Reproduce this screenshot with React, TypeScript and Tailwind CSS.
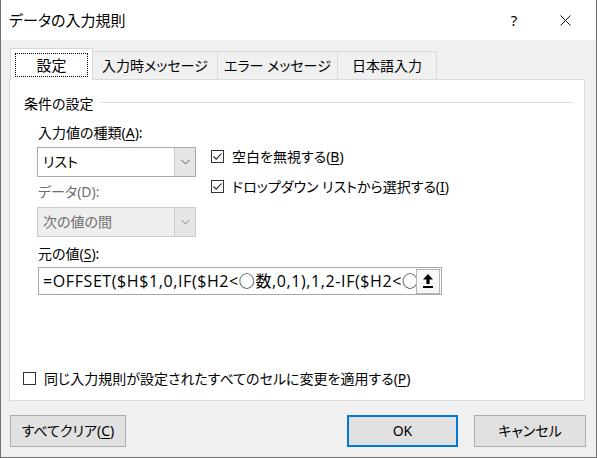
import React from "react";

const FONT = {
  fontFamily: '"Noto Sans", "Noto Sans CJK JP", sans-serif',
  fontFeatureSettings: '"palt"',
};

function Check({ checked }: { checked: boolean }) {
  return (
    <span className="w-[13px] h-[13px] border border-[#333333] bg-white flex items-center justify-center shrink-0">
      {checked && (
        <svg width="11" height="11" viewBox="0 0 11 11">
          <path d="M1.5 5.5 L4.2 8.2 L9.5 2.5" fill="none" stroke="#222" strokeWidth="1.1" />
        </svg>
      )}
    </span>
  );
}

function Chevron({ color = "#555" }: { color?: string }) {
  return (
    <svg width="9" height="6" viewBox="0 0 9 6">
      <path d="M0.5 1 L4.5 5 L8.5 1" fill="none" stroke={color} strokeWidth="1" />
    </svg>
  );
}

function Select({ value, disabled }: { value: string; disabled?: boolean }) {
  return (
    <div
      className={`w-[159px] h-[30px] flex border ${
        disabled ? "bg-[#eeeeee] border-[#cccccc] text-[#6d6d6d]" : "bg-white border-[#a9a9a9] text-black"
      }`}
    >
      <div className="flex-1 flex items-center pl-[5px]">{value}</div>
      <div
        className={`w-[21px] flex items-center justify-center border-l ${
          disabled ? "border-[#cccccc] bg-[#e6e6e6]" : "border-[#cfcfcf] bg-[#e5e5e5]"
        }`}
      >
        <Chevron color={disabled ? "#8a8a8a" : "#5a5a5a"} />
      </div>
    </div>
  );
}

function Key({ k }: { k: string }) {
  return (
    <>
      (<span className="underline underline-offset-2">{k}</span>)
    </>
  );
}

export default function App() {
  const tabs = ["入力時メッセージ", "エラー メッセージ", "日本語入力"];
  const tabWidths = ["w-[125px]", "w-[120px]", "w-[99px]"];

  return (
    <div
      className="w-[597px] h-[458px] bg-[#f0f0f0] border-x border-b border-[#6f6f6f] flex flex-col text-[14px] text-black leading-[20px]"
      style={FONT}
    >
      {/* title bar */}
      <div className="h-[40px] bg-white flex items-center pl-[8px] shrink-0 text-[15px]">
        <span className="flex-1">データの入力規則</span>
        <span className="w-[20px] text-center mr-[36px]">?</span>
        <svg width="11" height="11" viewBox="0 0 11 11" className="mr-[25px]">
          <path d="M0.5 0.5 L10.5 10.5 M10.5 0.5 L0.5 10.5" stroke="#111" strokeWidth="1" />
        </svg>
      </div>

      <div className="flex-1 flex flex-col pl-[8px] pr-[11px] pt-[8px]">
        {/* tabs */}
        <div className="flex items-end h-[31px] pl-[1px] text-[14px]">
          <div className="relative z-10 -mb-px w-[83px] h-[32px] bg-white border border-b-0 border-[#d9d9d9] flex items-center justify-center">
            <div className="w-[73px] h-[24px] border border-dotted border-black flex items-center justify-center text-[15px]">
              設定
            </div>
          </div>
          {tabs.map((t, i) => (
            <div
              key={t}
              className={`${tabWidths[i]} h-[28px] border-t border-r border-[#d9d9d9] flex items-center justify-center`}
            >
              {t}
            </div>
          ))}
        </div>

        {/* panel */}
        <div className="h-[322px] bg-white border border-[#d9d9d9] flex flex-col">
          <div className="flex items-center pl-[14px] pr-[11px] pt-[14px] h-[34px]">
            <span>条件の設定</span>
            <div className="flex-1 h-px bg-[#dcdcdc] ml-[6px] mt-[-3px]" />
          </div>

          <div className="flex mt-[9px]">
            <div className="flex flex-col pl-[27px]">
              <div className="h-[20px] pl-[1px]">
                入力値の種類<Key k="A" />:
              </div>
              <div className="mt-[4px]">
                <Select value="リスト" />
              </div>
              <div className="h-[20px] mt-[5px] pl-[1px] text-[#6d6d6d]">データ(D):</div>
              <div className="mt-[5px]">
                <Select value="次の値の間" disabled />
              </div>
            </div>
            <div className="flex flex-col pl-[15px] pt-[27px] gap-[17px]">
              <div className="flex items-center h-[13px]">
                <Check checked />
                <span className="ml-[8px] whitespace-nowrap">
                  空白を無視する<Key k="B" />
                </span>
              </div>
              <div className="flex items-center h-[13px]">
                <Check checked />
                <span className="ml-[8px] whitespace-nowrap">
                  ドロップダウン リストから選択する<Key k="I" />
                </span>
              </div>
            </div>
          </div>

          <div className="h-[20px] mt-[7px] pl-[28px]">
            元の値<Key k="S" />:
          </div>
          <div className="ml-[28px] mt-[3px] w-[404px] h-[28px] border border-[#a9a9a9] bg-white flex items-center">
            <div
              className="flex-1 overflow-hidden whitespace-nowrap pl-[4px] text-[16px] tracking-[0.6px]"
              style={{ fontFamily: '"Open Sans", "Noto Sans CJK JP", sans-serif' }}
            >
              =OFFSET($H$1,0,IF($H2&lt;○数,0,1),1,2-IF($H2&lt;○数,0,1))
            </div>
            <div className="w-[24px] h-[25px] mr-[1px] border border-[#b5b5b5] bg-[#f7f7f7] flex items-center justify-center shrink-0">
              <svg width="12" height="16" viewBox="0 0 12 16">
                <path d="M6 1 L11 6.5 L7.6 6.5 L7.6 11 L4.4 11 L4.4 6.5 L1 6.5 Z" fill="#000" />
                <rect x="1" y="13" width="10" height="2" fill="#000" />
              </svg>
            </div>
          </div>

          <div className="mt-auto mb-[15px] pl-[13px] flex items-center h-[13px]">
            <Check checked={false} />
            <span className="ml-[8px] whitespace-nowrap">
              同じ入力規則が設定されたすべてのセルに変更を適用する<Key k="P" />
            </span>
          </div>
        </div>

        {/* buttons */}
        <div className="flex mt-[14px] pl-[1px]">
          <button className="w-[116px] h-[32px] bg-[#e1e1e1] border border-[#adadad] flex items-center justify-center">
            すべてクリア<Key k="C" />
          </button>
          <div className="flex-1" />
          <button className="w-[111px] h-[32px] bg-[#e1e1e1] border-2 border-[#0078d7] flex items-center justify-center">
            OK
          </button>
          <button className="ml-[16px] mr-[-1px] w-[112px] h-[32px] bg-[#e1e1e1] border border-[#adadad] flex items-center justify-center">
            キャンセル
          </button>
        </div>
      </div>
    </div>
  );
}
